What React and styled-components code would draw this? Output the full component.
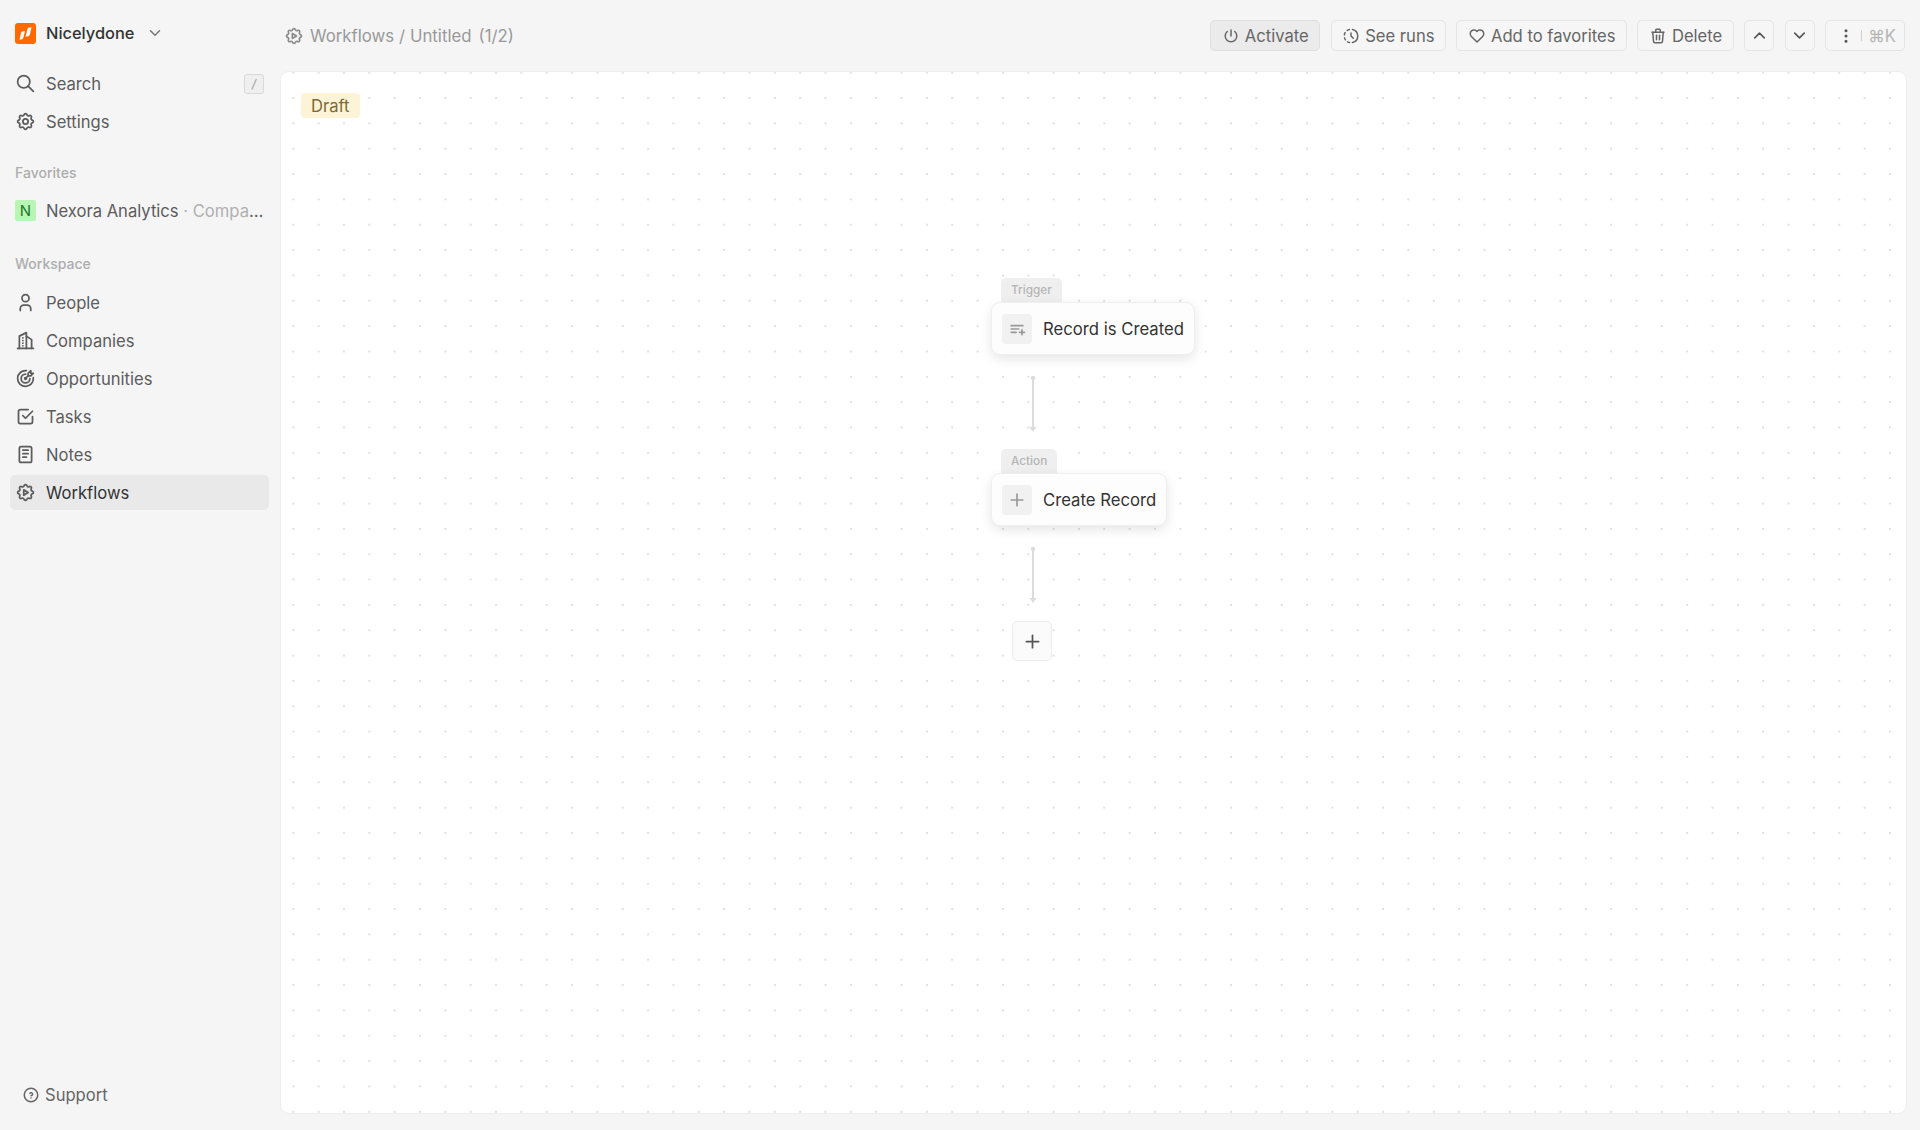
import React from 'react';
import styled, { createGlobalStyle } from 'styled-components';
import {
  TbChevronDown, TbChevronUp, TbSearch, TbSettings, TbUser, TbBuildingSkyscraper, TbTargetArrow,
  TbCheckbox, TbNotes, TbSettingsAutomation, TbPower, TbHistoryToggle, TbHeart, TbTrash,
  TbDotsVertical, TbPlaylistAdd, TbPlus, TbHelpCircle,
} from 'react-icons/tb';

const GlobalStyle = createGlobalStyle`
  html, body { margin: 0; padding: 0; height: 100%; }
  body { background: #f5f5f5; font-family: Inter, "Liberation Sans", sans-serif; }
  #root { height: 100%; }
`;

///////////////////////////////////////////////////////////////////////////////
// Layout

const Shell = styled.div`
  display: flex;
  height: 1130px;
  overflow: hidden;
`;

const Sidebar = styled.aside`
  width: 280px;
  flex-shrink: 0;
  display: flex;
  flex-direction: column;
  padding: 16px 11px 16px 10px;
  box-sizing: border-box;
`;

const Main = styled.main`
  flex: 1;
  min-width: 0;
  display: flex;
  flex-direction: column;
  padding: 0 13px 16px 0;
`;

///////////////////////////////////////////////////////////////////////////////
// Sidebar

const Brand = styled.div`
  display: flex;
  align-items: center;
  height: 34px;
  padding-left: 5px;
  margin-bottom: 16px;
  color: #333;
  font-size: 16.4px;
  font-weight: 500;
`;

const BrandName = styled.span`
  margin-left: 10px;
  margin-right: 11px;
`;

const LogoBox = styled.svg`
  width: 21px;
  height: 21px;
  flex-shrink: 0;
`;

const BrandChevron = styled(TbChevronDown)`
  color: #777;
  font-size: 18px;
`;

const Group = styled.div`
  display: flex;
  flex-direction: column;
  gap: 3px;
  margin-bottom: ${({ $gap }) => $gap || 0}px;
`;

const Row = styled.div`
  display: flex;
  align-items: center;
  height: 35px;
  padding: 0 5px;
  gap: 10px;
  border-radius: 5px;
  font-size: 16.6px;
  color: ${({ $active }) => ($active ? '#333' : '#5c5c5c')};
  background: ${({ $active }) => ($active ? '#e9e9e9' : 'transparent')};
  white-space: nowrap;
  svg { font-size: 21px; flex-shrink: 0; color: #5c5c5c; }
`;

const RowLabel = styled.span`
  flex: 1;
  min-width: 0;
  overflow: hidden;
  text-overflow: ellipsis;
`;

const Muted = styled.span`
  color: #b0b0b0;
`;

const Kbd = styled.span`
  width: 20px;
  height: 20px;
  box-sizing: border-box;
  display: flex;
  align-items: center;
  justify-content: center;
  border: 1px solid #d9d9d9;
  border-radius: 3px;
  background: #efefef;
  color: #999;
  font-size: 12px;
  font-style: italic;
`;

const SectionLabel = styled.div`
  padding-left: 5px;
  height: 20px;
  line-height: 20px;
  margin-bottom: ${({ $gap }) => $gap}px;
  color: #adadad;
  font-size: 14px;
  font-weight: 500;
`;

const Avatar = styled.span`
  width: 21px;
  height: 21px;
  flex-shrink: 0;
  display: flex;
  align-items: center;
  justify-content: center;
  border-radius: 2px;
  background: #b9f5b4;
  color: #1d7a27;
  font-size: 15px;
`;

const Support = styled.div`
  margin-top: auto;
  display: flex;
  align-items: center;
  gap: 5px;
  height: 24px;
  padding-left: 12px;
  margin-bottom: 7px;
  color: #666;
  font-size: 16.6px;
  svg { font-size: 18px; }
`;

///////////////////////////////////////////////////////////////////////////////
// Top bar

const TopBar = styled.header`
  height: 71px;
  flex-shrink: 0;
  display: flex;
  align-items: center;
  justify-content: space-between;
`;

const Crumbs = styled.div`
  display: flex;
  align-items: center;
  padding-left: 4px;
  color: #999;
  font-size: 16.8px;
  white-space: pre;
  svg { font-size: 20px; margin-right: 6px; color: #8a8a8a; }
`;

const CrumbPart = styled.span`
  margin-left: ${({ $gap }) => $gap || 0}px;
`;

const Actions = styled.div`
  display: flex;
  gap: 10.5px;
  padding-right: 2px;
`;

const Btn = styled.button`
  height: 31px;
  box-sizing: border-box;
  display: flex;
  align-items: center;
  gap: 5px;
  padding: 0 10.5px;
  font-family: inherit;
  font-size: 16.6px;
  color: #666;
  background: ${({ $pressed }) => ($pressed ? '#ebebeb' : '#f6f6f6')};
  border: 1px solid ${({ $pressed }) => ($pressed ? '#dedede' : '#e5e5e5')};
  border-radius: 5px;
  svg { font-size: 18px; flex-shrink: 0; }
`;

const IconBtn = styled(Btn)`
  width: 30px;
  padding: 0;
  justify-content: center;
  svg { font-size: 19px; color: #555; }
`;

const MenuBtn = styled(Btn)`
  padding: 0 8px 0 11px;
  gap: 6px;
  color: #b5b5b5;
  svg { color: #555; }
`;

const MenuPipe = styled.span`
  width: 1px;
  height: 11px;
  background: #cfcfcf;
`;

///////////////////////////////////////////////////////////////////////////////
// Canvas

const Canvas = styled.section`
  flex: 1;
  position: relative;
  border: 1px solid #ededed;
  border-radius: 9px;
  box-sizing: border-box;
  background-color: #fff;
  background-image: radial-gradient(circle, #e0e0e0 1px, transparent 1.2px);
  background-size: 25.35px 25.35px;
  background-position: -0.4px -12px;
`;

const DraftTag = styled.div`
  position: absolute;
  left: 20px;
  top: 21px;
  height: 25px;
  padding: 0 10px;
  display: flex;
  align-items: center;
  background: #fdf4d7;
  border-radius: 4px;
  color: #7b6a35;
  font-size: 16.6px;
`;

const FlowNode = styled.div`
  position: absolute;
  left: ${({ $x }) => $x}px;
  top: ${({ $y }) => $y}px;
`;

const NodeTag = styled.div`
  position: absolute;
  left: 10px;
  top: -24px;
  height: 24px;
  box-sizing: border-box;
  padding: 0 10px;
  display: flex;
  align-items: center;
  background: #efefef;
  border-radius: 5px 5px 0 0;
  color: #b5b5b5;
  font-size: 11.8px;
  font-weight: 500;
`;

const NodeCard = styled.div`
  display: flex;
  align-items: center;
  height: 53px;
  box-sizing: border-box;
  padding: 0 10px;
  gap: 11px;
  background: #fdfdfd;
  border: 1px solid #efefef;
  border-radius: 9px;
  box-shadow: 0 4px 12px rgba(0, 0, 0, 0.1);
  color: #333;
  font-size: 16.7px;
  white-space: nowrap;
  position: relative;
`;

const NodeIcon = styled.span`
  width: 30px;
  height: 30px;
  display: flex;
  align-items: center;
  justify-content: center;
  border-radius: 4px;
  background: #f1f1f1;
  color: #999;
  font-size: 20px;
`;

const Connector = styled.div`
  position: absolute;
  left: ${({ $x }) => $x}px;
  top: ${({ $y }) => $y}px;
`;

const AddStep = styled.div`
  position: absolute;
  left: 731px;
  top: 549px;
  width: 40px;
  height: 40px;
  box-sizing: border-box;
  display: flex;
  align-items: center;
  justify-content: center;
  background: #fbfbfb;
  border: 1px solid #ededed;
  border-radius: 5px;
  color: #555;
  font-size: 21px;
`;

const Logo = () => (
  <LogoBox viewBox="0 0 21 21">
    <rect width="21" height="21" rx="3" fill="#ff6a00" />
    <path d="M4.5 16.5 L6 10 Q6.4 8.2 8 8.2 L10 8.2 L8.4 14.6 Q8 16.5 6.2 16.5 Z" fill="#fff" />
    <path d="M10.6 13.5 L12.4 6 Q12.8 4.5 14.4 4.5 L16.5 4.5 L14.8 11.6 Q14.3 13.5 12.6 13.5 Z" fill="#fff" />
  </LogoBox>
);

const Link = () => (
  <svg width="12" height="60" viewBox="0 0 12 60">
    <circle cx="6" cy="3" r="2.2" fill="#dcdcdc" />
    <line x1="6" y1="3" x2="6" y2="53" stroke="#dcdcdc" strokeWidth="2" />
    <path d="M2.5 52 H9.5 L6 57 Z" fill="#dcdcdc" />
  </svg>
);

const NAV = [
  ['People', TbUser],
  ['Companies', TbBuildingSkyscraper],
  ['Opportunities', TbTargetArrow],
  ['Tasks', TbCheckbox],
  ['Notes', TbNotes],
  ['Workflows', TbSettingsAutomation, true],
];

const App = () => (
  <Shell>
    <GlobalStyle />
    <Sidebar>
      <Brand>
        <Logo />
        <BrandName>Nicelydone</BrandName>
        <BrandChevron />
      </Brand>
      <Group $gap={24}>
        <Row><TbSearch /><RowLabel>Search</RowLabel><Kbd>/</Kbd></Row>
        <Row><TbSettings /><RowLabel>Settings</RowLabel></Row>
      </Group>
      <SectionLabel $gap={10}>Favorites</SectionLabel>
      <Group $gap={26}>
        <Row><Avatar>N</Avatar><RowLabel>Nexora Analytics <Muted>· Company</Muted></RowLabel></Row>
      </Group>
      <SectionLabel $gap={11}>Workspace</SectionLabel>
      <Group>
        {NAV.map(([label, Icon, active]) => (
          <Row key={label} $active={active}><Icon />{label}</Row>
        ))}
      </Group>
      <Support><TbHelpCircle />Support</Support>
    </Sidebar>
    <Main>
      <TopBar>
        <Crumbs>
          <TbSettingsAutomation />
          <CrumbPart>Workflows /</CrumbPart>
          <CrumbPart $gap={5}>Untitled</CrumbPart>
          <CrumbPart $gap={7}>(1/2)</CrumbPart>
        </Crumbs>
        <Actions>
          <Btn $pressed><TbPower />Activate</Btn>
          <Btn><TbHistoryToggle />See runs</Btn>
          <Btn><TbHeart />Add to favorites</Btn>
          <Btn><TbTrash />Delete</Btn>
          <IconBtn><TbChevronUp /></IconBtn>
          <IconBtn><TbChevronDown /></IconBtn>
          <MenuBtn><TbDotsVertical /><MenuPipe />⌘K</MenuBtn>
        </Actions>
      </TopBar>
      <Canvas>
        <DraftTag>Draft</DraftTag>
        <FlowNode $x={710} $y={230}>
          <NodeTag>Trigger</NodeTag>
          <NodeCard><NodeIcon><TbPlaylistAdd /></NodeIcon>Record is Created</NodeCard>
        </FlowNode>
        <Connector $x={746} $y={303}><Link /></Connector>
        <FlowNode $x={710} $y={401}>
          <NodeTag>Action</NodeTag>
          <NodeCard><NodeIcon><TbPlus /></NodeIcon>Create Record</NodeCard>
        </FlowNode>
        <Connector $x={746} $y={474}><Link /></Connector>
        <AddStep><TbPlus /></AddStep>
      </Canvas>
    </Main>
  </Shell>
);

export default App;
